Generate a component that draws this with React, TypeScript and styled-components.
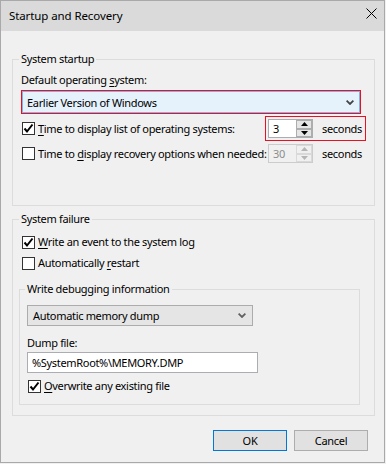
import React from "react";
import styled, { createGlobalStyle } from "styled-components";

const Global = createGlobalStyle`
  html, body {
    margin: 0;
    padding: 0;
    background: #f0f0f0;
  }
  body {
    font-family: "Noto Sans", "Liberation Sans", sans-serif;
    font-size: 11px;
    letter-spacing: -0.32px;
    color: #000;
    white-space: nowrap;
  }
`;

const Dialog = {
  Window: styled.div`
    box-sizing: border-box;
    width: 385px;
    height: 463px;
    border: 1px solid #a9a9a9;
    background: #f0f0f0;
    display: flex;
    flex-direction: column;
  `,
  TitleBar: styled.div`
    height: 30px;
    background: #dadada;
    display: flex;
    align-items: center;
    justify-content: space-between;
    padding: 0 7px 0 8px;
  `,
  Title: styled.span`
    font-size: 11.5px;
    letter-spacing: -0.1px;
    line-height: 16px;
    margin-top: -1px;
  `,
  Close: styled.div`
    width: 11px;
    height: 11px;
    margin-top: -6px;
    display: flex;
  `,
  Body: styled.div`
    flex: 1;
    display: flex;
    flex-direction: column;
    padding: 20px 9px 0 11px;
  `,
  Footer: styled.div`
    display: flex;
    justify-content: flex-end;
    gap: 7px;
    margin-top: 14px;
    padding-right: 7px;
  `,
};

const Group = styled.fieldset<{ $inner?: boolean; $bottom: number }>`
  margin: ${(p) => (p.$inner ? "0 6px 0 -2px" : "0")};
  padding: 0 ${(p) => (p.$inner ? "7px" : "8px")} ${(p) => p.$bottom}px;
  border: 1px solid #dcdcdc;
  display: flex;
  flex-direction: column;
  min-width: 0;
`;

const Legend = styled.legend`
  padding: 0 2px;
  margin-left: -2px;
  line-height: 16px;
  height: 16px;
`;

const Label = styled.div<{ $top?: number }>`
  line-height: 16px;
  margin-top: ${(p) => p.$top ?? 0}px;
`;

const Key = styled.span`
  text-decoration: underline;
  text-underline-offset: 2px;
`;

const Row = styled.div<{ $top?: number }>`
  display: flex;
  align-items: center;
  margin-top: ${(p) => p.$top ?? 0}px;
`;

const CheckRow = styled.label<{ $top?: number }>`
  display: flex;
  align-items: center;
  gap: 3px;
  line-height: 16px;
  height: 16px;
  min-width: 0;
  margin-top: ${(p) => p.$top ?? 0}px;
`;

const Box = styled.span`
  box-sizing: border-box;
  flex: none;
  width: 13px;
  height: 13px;
  margin-left: 1px;
  border: 1px solid #333;
  background: #fff;
  display: flex;
  align-items: center;
  justify-content: center;
`;

const Select = styled.div<{ $focus?: boolean; $width: number; $top?: number }>`
  box-sizing: border-box;
  width: ${(p) => p.$width}px;
  height: ${(p) => (p.$focus ? 24 : 21)}px;
  margin-top: ${(p) => p.$top ?? 0}px;
  border: 1px solid ${(p) => (p.$focus ? "#e81123" : "#acacac")};
  background: ${(p) => (p.$focus ? "#e5f1fb" : "#e5e5e5")};
  box-shadow: ${(p) => (p.$focus ? "inset 0 0 0 1px #7eb4ea" : "none")};
  display: flex;
  align-items: center;
  justify-content: space-between;
  padding: 0 6px 0 5px;
`;

const Frame = styled.div<{ $marked?: boolean }>`
  flex: none;
  margin-left: auto;
  display: flex;
  align-items: center;
  gap: 9px;
  padding: 2px 3px 2px 2px;
  border: 1px solid ${(p) => (p.$marked ? "#e81123" : "transparent")};
`;

const Spin = styled.div<{ $disabled?: boolean }>`
  box-sizing: border-box;
  width: 45px;
  height: 19px;
  border: 1px solid ${(p) => (p.$disabled ? "#cccccc" : "#abadb3")};
  background: ${(p) => (p.$disabled ? "#f0f0f0" : "#fff")};
  color: ${(p) => (p.$disabled ? "#8d8d8d" : "#000")};
  display: flex;
  align-items: stretch;
`;

const SpinValue = styled.span`
  flex: 1;
  padding-left: 4px;
  line-height: 17px;
`;

const SpinButtons = styled.div`
  width: 16px;
  display: flex;
  flex-direction: column;
`;

const SpinButton = styled.div<{ $disabled?: boolean }>`
  flex: 1;
  box-sizing: border-box;
  border: 1px solid ${(p) => (p.$disabled ? "#d9d9d9" : "#adadad")};
  background: ${(p) => (p.$disabled ? "#f0f0f0" : "#e5e5e5")};
  display: flex;
  align-items: center;
  justify-content: center;
`;

const Input = styled.div`
  box-sizing: border-box;
  width: 231px;
  height: 21px;
  margin-top: 1px;
  border: 1px solid #abadb3;
  background: #fff;
  padding-left: 4px;
  line-height: 19px;
`;

const Button = styled.div<{ $primary?: boolean }>`
  box-sizing: border-box;
  width: 74px;
  height: 21px;
  border: 1px solid ${(p) => (p.$primary ? "#0078d7" : "#adadad")};
  background: #e1e1e1;
  display: flex;
  align-items: center;
  justify-content: center;
`;

const Check = () => (
  <svg width="11" height="11" viewBox="0 0 11 11">
    <path d="M1.5 5.5 L4 8.5 L9.5 1.5" fill="none" stroke="#000" strokeWidth="2" />
  </svg>
);

const CheckBox = ({ checked }: { checked?: boolean }) => (
  <Box>{checked && <Check />}</Box>
);

const Chevron = ({ color = "#444" }: { color?: string }) => (
  <svg width="8" height="5" viewBox="0 0 8 5">
    <path d="M0.6 0.7 L4 4 L7.4 0.7" fill="none" stroke={color} strokeWidth="1.8" />
  </svg>
);

const Arrow = ({ up, color }: { up?: boolean; color: string }) => (
  <svg width="7" height="4" viewBox="0 0 7 4">
    <path d={up ? "M0 4 L3.5 0 L7 4 Z" : "M0 0 L3.5 4 L7 0 Z"} fill={color} />
  </svg>
);

const SpinBox = ({ value, disabled }: { value: string; disabled?: boolean }) => {
  const c = disabled ? "#b5b5b5" : "#000";
  return (
    <Spin $disabled={disabled}>
      <SpinValue>{value}</SpinValue>
      <SpinButtons>
        <SpinButton $disabled={disabled}>
          <Arrow up color={c} />
        </SpinButton>
        <SpinButton $disabled={disabled}>
          <Arrow color={c} />
        </SpinButton>
      </SpinButtons>
    </Spin>
  );
};

export default function App() {
  return (
    <>
      <Global />
      <Dialog.Window>
        <Dialog.TitleBar>
          <Dialog.Title>Startup and Recovery</Dialog.Title>
          <Dialog.Close>
            <svg width="11" height="11" viewBox="0 0 11 11">
              <path d="M0.5 0.5 L10.5 10.5 M10.5 0.5 L0.5 10.5" stroke="#000" strokeWidth="1" />
            </svg>
          </Dialog.Close>
        </Dialog.TitleBar>

        <Dialog.Body>
          <Group $bottom={39}>
            <Legend>System startup</Legend>
            <Label $top={5}>
              Default operating <Key>s</Key>ystem:
            </Label>
            <Select $focus $width={340} $top={2}>
              <span>Earlier Version of Windows</span>
              <Chevron />
            </Select>
            <Row $top={2}>
              <CheckRow>
                <CheckBox checked />
                <span>
                  <Key>T</Key>ime to display list of operating systems:
                </span>
              </CheckRow>
              <Frame $marked>
                <SpinBox value="3" />
                <span>seconds</span>
              </Frame>
            </Row>
            <Row>
              <CheckRow>
                <CheckBox />
                <span>
                  Time to <Key>d</Key>isplay recovery options when needed:
                </span>
              </CheckRow>
              <Frame>
                <SpinBox value="30" disabled />
                <span>seconds</span>
              </Frame>
            </Row>
          </Group>

          <Group $bottom={10} style={{ marginTop: 5 }}>
            <Legend>System failure</Legend>
            <CheckRow $top={7}>
              <CheckBox checked />
              <span>
                <Key>W</Key>rite an event to the system log
              </span>
            </CheckRow>
            <CheckRow $top={5}>
              <CheckBox />
              <span>
                Automatically <Key>r</Key>estart
              </span>
            </CheckRow>
            <div style={{ height: 10 }} />
            <Group $inner $bottom={10}>
              <Legend>Write debugging information</Legend>
              <Select $width={226} $top={8}>
                <span>Automatic memory dump</span>
                <Chevron color="#606060" />
              </Select>
              <Label $top={9}>Dump file:</Label>
              <Input>%SystemRoot%\MEMORY.DMP</Input>
              <CheckRow $top={5}>
                <CheckBox checked />
                <span>
                  <Key>O</Key>verwrite any existing file
                </span>
              </CheckRow>
            </Group>
          </Group>

          <Dialog.Footer>
            <Button $primary>OK</Button>
            <Button>Cancel</Button>
          </Dialog.Footer>
        </Dialog.Body>
      </Dialog.Window>
    </>
  );
}
